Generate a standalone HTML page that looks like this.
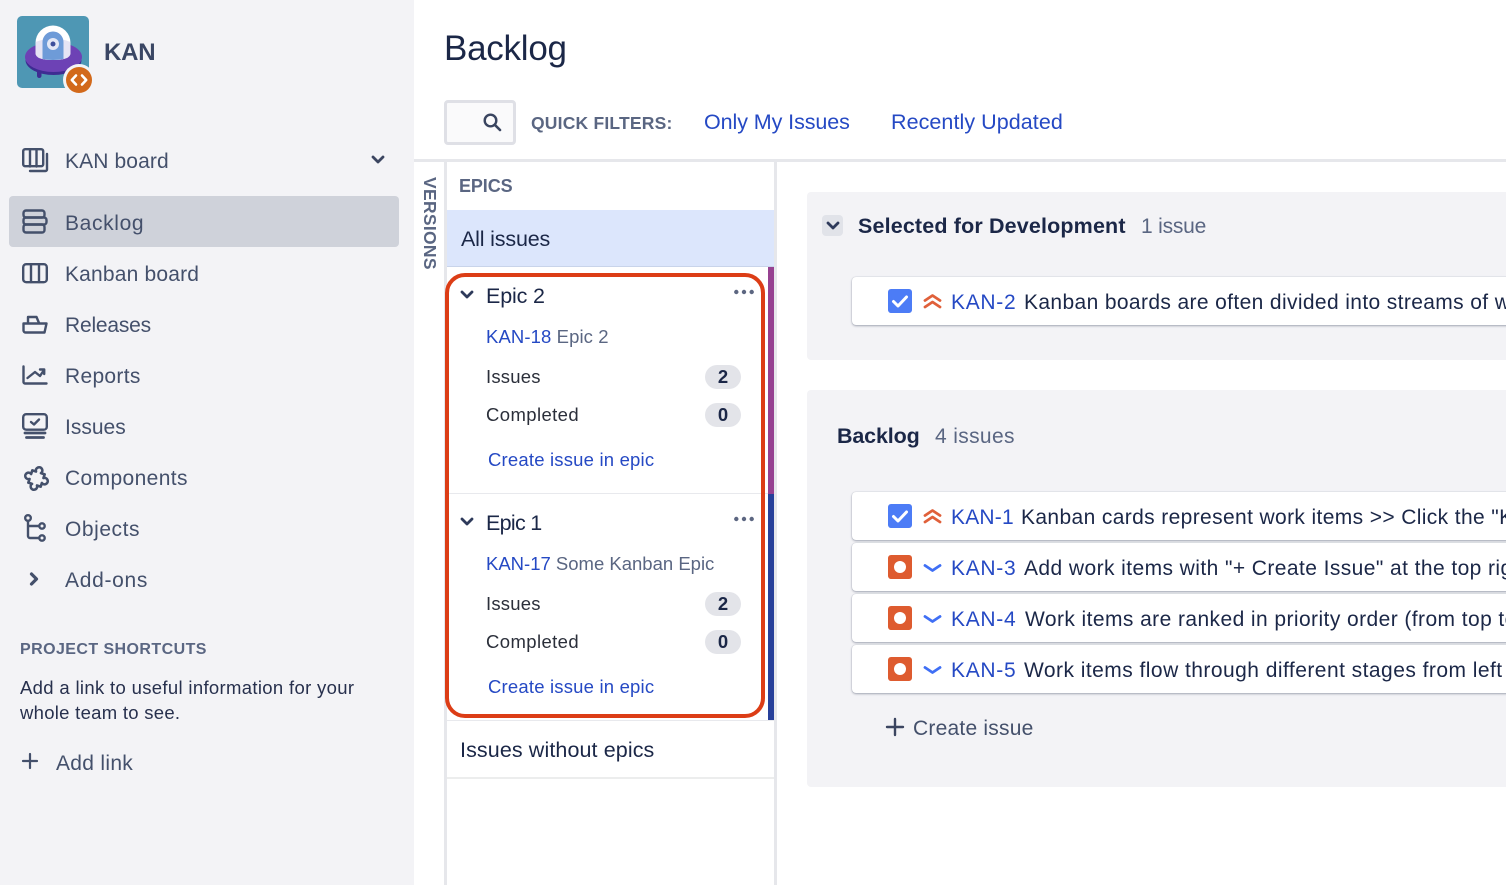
<!DOCTYPE html>
<html lang="en">
<head>
<meta charset="utf-8">
<title>Backlog</title>
<style>
html,body{margin:0;padding:0;width:1506px;height:885px;overflow:hidden;background:#fff;font-family:"Liberation Sans",sans-serif;}
#page{position:relative;width:1506px;height:885px;overflow:hidden;background:#fff;}
.b{position:absolute;box-sizing:border-box;}
.t{position:absolute;white-space:nowrap;line-height:24px;height:24px;}
.nav{font-size:21px;color:#44506b;left:65px;}
.lnk{color:#2549c4;}
.dk{color:#1b2747;}
.epic{font-size:21.5px;color:#1b2747;left:486px;}
.sm{font-size:18.5px;color:#2b2f3a;left:486px;letter-spacing:.2px;}
.id{font-size:18.5px;left:486px;letter-spacing:.1px;}
.cr{font-size:18.5px;left:488px;letter-spacing:.19px;color:#2549c4;}
.pill{position:absolute;left:705px;width:36px;height:24px;border-radius:12px;background:#e3e4e9;color:#1b2747;font-weight:bold;font-size:18.5px;line-height:24px;text-align:center;}
.card{position:absolute;left:852px;width:680px;background:#fff;border-radius:4px;box-shadow:0 1px 2px rgba(40,50,80,.38),0 0 1px rgba(40,50,80,.25);}
.row{font-size:21px;color:#1b2747;letter-spacing:.37px;}
.key{font-size:21px;color:#2549c4;letter-spacing:.7px;left:951px;}
svg{position:absolute;overflow:visible;}
.ic{fill:none;stroke:#44506b;stroke-width:2.4;stroke-linecap:round;stroke-linejoin:round;}
</style>
</head>
<body>
<div id="page">

<!-- Sidebar -->
<div class="b" style="left:0;top:0;width:414px;height:885px;background:#f3f3f6;"></div>

<svg style="left:17px;top:16px" width="78" height="78" viewBox="0 0 78 78">
  <rect width="72" height="72" rx="5" fill="#4e97b4"/>
  <rect x="20" y="52" width="4.500" height="10" rx="2.200" fill="#3e2c92"/>
  <ellipse cx="36.500" cy="44" rx="28" ry="15" fill="#3e2c92"/>
  <ellipse cx="36.500" cy="41" rx="28.500" ry="15" fill="#6d42b5"/>
  <path d="M18.500 27a17.500 17.500 0 0 1 35 0v10q0 7-17.500 7t-17.500-7z" fill="#fff"/>
  <path d="M18.500 26q18-7 35 0v11q0 7-17.500 7t-17.500-7z" fill="#e6e4f4"/>
  <path d="M25.500 26a10.500 10.500 0 0 1 21 0v17q-10.500 2-21 0z" fill="#6e9bd8"/>
  <circle cx="36" cy="28" r="6" fill="#e4e8f6"/><circle cx="36" cy="28" r="2.500" fill="#3d4f9c"/>
  <circle cx="62" cy="64" r="16" fill="#f3f3f6"/>
  <circle cx="62" cy="64" r="13" fill="#d2691b"/>
  <path d="M59 59.500 54.800 64l4.200 4.500M65 59.500 69.200 64 65 68.500" fill="none" stroke="#fff" stroke-width="2.600" stroke-linecap="round" stroke-linejoin="round"/>
</svg>
<div class="t" style="left:104px;top:41px;font-size:24px;font-weight:bold;color:#3a4664;letter-spacing:-.2px;">KAN</div>

<!-- KAN board -->
<svg style="left:22px;top:148px" width="28" height="26" class="ic" viewBox="0 0 28 26">
  <rect x="1.200" y="1.200" width="20" height="17" rx="2"/><path d="M8 1.500v17M14.500 1.500v17"/><path d="M25 6v15.500a1.500 1.500 0 0 1-1.500 1.500H8"/>
</svg>
<div class="t nav" style="top:150px;letter-spacing:.12px;">KAN board</div>
<svg style="left:371px;top:155px" width="14" height="10" viewBox="0 0 14 10"><path d="M2 2l5 5 5-5" fill="none" stroke="#3b4560" stroke-width="2.800" stroke-linecap="round" stroke-linejoin="round"/></svg>

<!-- Backlog -->
<div class="b" style="left:9px;top:196px;width:390px;height:51px;background:#cfd2da;border-radius:4px;"></div>
<svg style="left:22px;top:209px" width="26" height="26" class="ic" viewBox="0 0 26 26">
  <rect x="1.500" y="1.500" width="21" height="7" rx="2.500"/><rect x="1.500" y="8.500" width="23" height="7" rx="2.500"/><rect x="1.500" y="15.500" width="21" height="8" rx="2.500"/>
</svg>
<div class="t nav" style="top:212px;letter-spacing:.65px;">Backlog</div>

<!-- Kanban board -->
<svg style="left:22px;top:263px" width="26" height="22" class="ic" viewBox="0 0 26 22">
  <rect x="1.200" y="1.200" width="23.600" height="18" rx="3"/><path d="M9 1.500v17.500M17 1.500v17.500"/>
</svg>
<div class="t nav" style="top:263px;letter-spacing:.18px;">Kanban board</div>

<!-- Releases -->
<svg style="left:22px;top:314px" width="26" height="22" class="ic" viewBox="0 0 26 22">
  <path d="M6 9V3h8.500L17 9"/><path d="M1.500 9.500H24.500L22.500 18.500H3.500A2 2 0 0 1 1.500 16.500Z"/>
</svg>
<div class="t nav" style="top:314px;letter-spacing:-.2px;">Releases</div>

<!-- Reports -->
<svg style="left:22px;top:365px" width="26" height="22" class="ic" viewBox="0 0 26 22">
  <path d="M1.500 1.500V17a1.500 1.500 0 0 0 1.500 1.500H24.500"/><path d="M5.500 13l7.500-6 5 4 4-6"/><path d="M18 4.500h4.200V9"/>
</svg>
<div class="t nav" style="top:365px;letter-spacing:.3px;">Reports</div>

<!-- Issues -->
<svg style="left:22px;top:413px" width="26" height="28" class="ic" viewBox="0 0 26 28">
  <rect x="1.200" y="1.200" width="23.600" height="15.500" rx="3"/><path d="M9 9l3 2.500 5-5"/><path d="M3 20h20M4.500 24.500h17" stroke-width="2.800"/>
</svg>
<div class="t nav" style="top:416px;">Issues</div>

<!-- Components -->
<svg style="left:23px;top:465px" width="27" height="27" class="ic" viewBox="0 0 27 27">
  <g transform="translate(13.500 13.500) rotate(18) scale(1.080)">
    <path d="M-6-6H-2.400a3 3 0 1 1 4.800 0H6V-2.400a3 3 0 1 1 0 4.800V6H2.400a3 3 0 1 1-4.800 0H-6V2.400a3 3 0 1 1 0-4.800Z"/>
  </g>
</svg>
<div class="t nav" style="top:467px;letter-spacing:.38px;">Components</div>

<!-- Objects -->
<svg style="left:23px;top:514px" width="26" height="28" class="ic" viewBox="0 0 26 28">
  <circle cx="5" cy="4" r="2.800"/><circle cx="19" cy="12" r="2.700"/><circle cx="19" cy="24" r="2.700"/><path d="M5 7v15a2 2 0 0 0 2 2h9.300M5 12h11.300"/>
</svg>
<div class="t nav" style="top:518px;letter-spacing:.55px;">Objects</div>

<!-- Add-ons -->
<svg style="left:28px;top:571px" width="12" height="16" viewBox="0 0 12 16"><path d="M3.500 3l5 5-5 5" fill="none" stroke="#44506b" stroke-width="3.200" stroke-linecap="round" stroke-linejoin="round"/></svg>
<div class="t nav" style="top:569px;letter-spacing:.7px;">Add-ons</div>

<div class="t" style="left:20px;top:638px;font-size:16px;font-weight:bold;color:#5a6682;letter-spacing:.43px;">PROJECT SHORTCUTS</div>
<div class="t" style="left:20px;top:676px;font-size:18.500px;color:#27304d;letter-spacing:.33px;">Add a link to useful information for your</div>
<div class="t" style="left:20px;top:701px;font-size:18.500px;color:#27304d;letter-spacing:.28px;">whole team to see.</div>
<svg style="left:22px;top:753px" width="16" height="16" viewBox="0 0 16 16"><path d="M8 1v14M1 8h14" stroke="#44506b" stroke-width="2.200" stroke-linecap="round"/></svg>
<div class="t nav" style="left:56px;top:752px;letter-spacing:.3px;">Add link</div>

<!-- Header -->
<div class="t dk" style="left:444px;top:29px;height:40px;line-height:40px;font-size:35px;letter-spacing:-.25px;">Backlog</div>
<div class="b" style="left:444px;top:100px;width:72px;height:45px;background:#fafafb;border:3px solid #dfe0e6;border-radius:4px;"></div>
<svg style="left:482px;top:112px" width="20" height="20" viewBox="0 0 20 20"><circle cx="8.500" cy="8.500" r="5.800" fill="none" stroke="#3a4560" stroke-width="2.400"/><path d="M13 13l5 5" stroke="#3a4560" stroke-width="2.600" stroke-linecap="round"/></svg>
<div class="t" style="left:531px;top:111px;font-size:17.500px;font-weight:bold;color:#5a6682;letter-spacing:.2px;">QUICK FILTERS:</div>
<div class="t lnk" style="left:704px;top:110px;font-size:21.500px;letter-spacing:-.08px;">Only My Issues</div>
<div class="t lnk" style="left:891px;top:110px;font-size:21.500px;letter-spacing:.06px;">Recently Updated</div>

<div class="b" style="left:414px;top:159px;width:1092px;height:3px;background:#e6e7eb;"></div>

<!-- Versions strip -->
<div class="b" style="left:444px;top:162px;width:3px;height:723px;background:#e6e7eb;"></div>
<div class="t" style="left:430px;top:177px;font-size:17.500px;font-weight:bold;color:#5a6682;transform-origin:0 0;transform:rotate(90deg) translateY(-12px);letter-spacing:.3px;">VERSIONS</div>

<!-- Epic panel -->
<div class="b" style="left:774px;top:162px;width:3px;height:723px;background:#e6e7eb;"></div>
<div class="t" style="left:459px;top:174px;font-size:18px;font-weight:bold;color:#5a6682;letter-spacing:-.1px;">EPICS</div>
<div class="b" style="left:447px;top:210px;width:327px;height:57px;background:#dce6fc;border-bottom:1px solid #c9d4ea;"></div>
<div class="t dk" style="left:461px;top:227px;font-size:21.500px;letter-spacing:-.17px;">All issues</div>

<div class="b" style="left:768px;top:267px;width:6px;height:227px;background:#964191;"></div>
<div class="b" style="left:768px;top:494px;width:6px;height:227px;background:#27409a;"></div>
<div class="b" style="left:447px;top:493px;width:321px;height:1px;background:#e8e9ed;"></div>
<div class="b" style="left:447px;top:720px;width:327px;height:1px;background:#e8e9ed;"></div>
<div class="b" style="left:447px;top:777px;width:327px;height:2px;background:#eceded;"></div>
<div class="b" style="left:445px;top:273px;width:320px;height:445px;border:4px solid #dc3d16;border-radius:20px;"></div>

<!-- Epic 2 -->
<svg style="left:460px;top:290px" width="14" height="10" viewBox="0 0 14 10"><path d="M2 2l5 5 5-5" fill="none" stroke="#2e3a5b" stroke-width="2.800" stroke-linecap="round" stroke-linejoin="round"/></svg>
<div class="t epic" style="top:284px;letter-spacing:-.15px;">Epic 2</div>
<svg style="left:734px;top:289px" width="20" height="6" viewBox="0 0 20 6"><g fill="#5c6681"><circle cx="2.300" cy="3" r="2.200"/><circle cx="10" cy="3" r="2.200"/><circle cx="17.700" cy="3" r="2.200"/></g></svg>
<div class="t id" style="top:325px;"><span class="lnk">KAN-18</span> <span style="color:#5a6682;">Epic 2</span></div>
<div class="t sm" style="top:365px;">Issues</div>
<div class="pill" style="top:365px;">2</div>
<div class="t sm" style="top:403px;letter-spacing:.4px;">Completed</div>
<div class="pill" style="top:403px;">0</div>
<div class="t cr" style="top:448px;">Create issue in epic</div>

<!-- Epic 1 -->
<svg style="left:460px;top:517px" width="14" height="10" viewBox="0 0 14 10"><path d="M2 2l5 5 5-5" fill="none" stroke="#2e3a5b" stroke-width="2.800" stroke-linecap="round" stroke-linejoin="round"/></svg>
<div class="t epic" style="top:511px;letter-spacing:-.7px;">Epic 1</div>
<svg style="left:734px;top:516px" width="20" height="6" viewBox="0 0 20 6"><g fill="#5c6681"><circle cx="2.300" cy="3" r="2.200"/><circle cx="10" cy="3" r="2.200"/><circle cx="17.700" cy="3" r="2.200"/></g></svg>
<div class="t id" style="top:552px;letter-spacing:0;"><span class="lnk">KAN-17</span> <span style="color:#5a6682;">Some Kanban Epic</span></div>
<div class="t sm" style="top:592px;">Issues</div>
<div class="pill" style="top:592px;">2</div>
<div class="t sm" style="top:630px;letter-spacing:.4px;">Completed</div>
<div class="pill" style="top:630px;">0</div>
<div class="t cr" style="top:675px;">Create issue in epic</div>

<div class="t dk" style="left:460px;top:738px;font-size:21.500px;letter-spacing:.1px;">Issues without epics</div>

<!-- Selected for Development -->
<div class="b" style="left:807px;top:192px;width:720px;height:168px;background:#f3f3f6;border-radius:4px;"></div>
<div class="b" style="left:822px;top:215px;width:21px;height:21px;background:#e1e3e9;border-radius:4px;"></div>
<svg style="left:826px;top:221px" width="14" height="10" viewBox="0 0 14 10"><path d="M2 2l5 5 5-5" fill="none" stroke="#2e3a5b" stroke-width="2.800" stroke-linecap="round" stroke-linejoin="round"/></svg>
<div class="t dk" style="left:858px;top:214px;font-size:21.500px;font-weight:bold;letter-spacing:.15px;">Selected for Development</div>
<div class="t" style="left:1141px;top:215px;font-size:21px;color:#5a6682;letter-spacing:-.2px;">1 issue</div>

<div class="card" style="top:277px;height:48px;"></div>
<svg style="left:888px;top:289px" width="24" height="24" viewBox="0 0 24 24"><rect width="24" height="24" rx="3" fill="#4c7cf6"/><path d="M5.500 12.500l4.500 4.500 8.500-9" fill="none" stroke="#fff" stroke-width="3" stroke-linecap="round" stroke-linejoin="round"/></svg>
<svg style="left:923px;top:293px" width="19" height="16" viewBox="0 0 19 16"><path d="M2 7.500l7.500-5 7.500 5M2 14l7.500-5 7.500 5" fill="none" stroke="#e0603a" stroke-width="2.800" stroke-linecap="round" stroke-linejoin="round"/></svg>
<div class="t key" style="top:291px;">KAN-2</div>
<div class="t row" style="left:1024px;top:291px;">Kanban boards are often divided into streams of work</div>

<!-- Backlog section -->
<div class="b" style="left:807px;top:390px;width:720px;height:397px;background:#f3f3f6;border-radius:4px;"></div>
<div class="t dk" style="left:837px;top:424px;font-size:21.500px;font-weight:bold;letter-spacing:-.15px;">Backlog</div>
<div class="t" style="left:935px;top:425px;font-size:21px;color:#5a6682;letter-spacing:.35px;">4 issues</div>

<div class="card" style="top:492px;height:48px;"></div>
<svg style="left:888px;top:504px" width="24" height="24" viewBox="0 0 24 24"><rect width="24" height="24" rx="3" fill="#4c7cf6"/><path d="M5.500 12.500l4.500 4.500 8.500-9" fill="none" stroke="#fff" stroke-width="3" stroke-linecap="round" stroke-linejoin="round"/></svg>
<svg style="left:923px;top:508px" width="19" height="16" viewBox="0 0 19 16"><path d="M2 7.500l7.500-5 7.500 5M2 14l7.500-5 7.500 5" fill="none" stroke="#e0603a" stroke-width="2.800" stroke-linecap="round" stroke-linejoin="round"/></svg>
<div class="t key" style="top:506px;letter-spacing:.2px;">KAN-1</div>
<div class="t row" style="left:1021px;top:506px;">Kanban cards represent work items &gt;&gt; Click the "KAN-1"</div>

<div class="card" style="top:543px;height:48px;"></div>
<svg style="left:888px;top:555px" width="24" height="24" viewBox="0 0 24 24"><rect width="24" height="24" rx="3" fill="#de5b2f"/><circle cx="12" cy="12" r="6" fill="#fff"/></svg>
<svg style="left:923px;top:563px" width="19" height="10" viewBox="0 0 19 10"><path d="M2 2.500l7.500 5 7.500-5" fill="none" stroke="#3f6ff5" stroke-width="2.800" stroke-linecap="round" stroke-linejoin="round"/></svg>
<div class="t key" style="top:557px;">KAN-3</div>
<div class="t row" style="left:1024px;top:557px;letter-spacing:.42px;">Add work items with "+ Create Issue" at the top right</div>

<div class="card" style="top:594px;height:48px;"></div>
<svg style="left:888px;top:606px" width="24" height="24" viewBox="0 0 24 24"><rect width="24" height="24" rx="3" fill="#de5b2f"/><circle cx="12" cy="12" r="6" fill="#fff"/></svg>
<svg style="left:923px;top:614px" width="19" height="10" viewBox="0 0 19 10"><path d="M2 2.500l7.500 5 7.500-5" fill="none" stroke="#3f6ff5" stroke-width="2.800" stroke-linecap="round" stroke-linejoin="round"/></svg>
<div class="t key" style="top:608px;">KAN-4</div>
<div class="t row" style="left:1025px;top:608px;letter-spacing:.42px;">Work items are ranked in priority order (from top to bottom)</div>

<div class="card" style="top:645px;height:48px;"></div>
<svg style="left:888px;top:657px" width="24" height="24" viewBox="0 0 24 24"><rect width="24" height="24" rx="3" fill="#de5b2f"/><circle cx="12" cy="12" r="6" fill="#fff"/></svg>
<svg style="left:923px;top:665px" width="19" height="10" viewBox="0 0 19 10"><path d="M2 2.500l7.500 5 7.500-5" fill="none" stroke="#3f6ff5" stroke-width="2.800" stroke-linecap="round" stroke-linejoin="round"/></svg>
<div class="t key" style="top:659px;">KAN-5</div>
<div class="t row" style="left:1024px;top:659px;letter-spacing:.46px;">Work items flow through different stages from left to right</div>

<svg style="left:886px;top:718px" width="18" height="18" viewBox="0 0 18 18"><path d="M9 1v16M1 9h16" stroke="#3b4560" stroke-width="2.400" stroke-linecap="round"/></svg>
<div class="t" style="left:913px;top:717px;font-size:21px;color:#44506b;letter-spacing:.22px;">Create issue</div>

</div>
</body>
</html>
